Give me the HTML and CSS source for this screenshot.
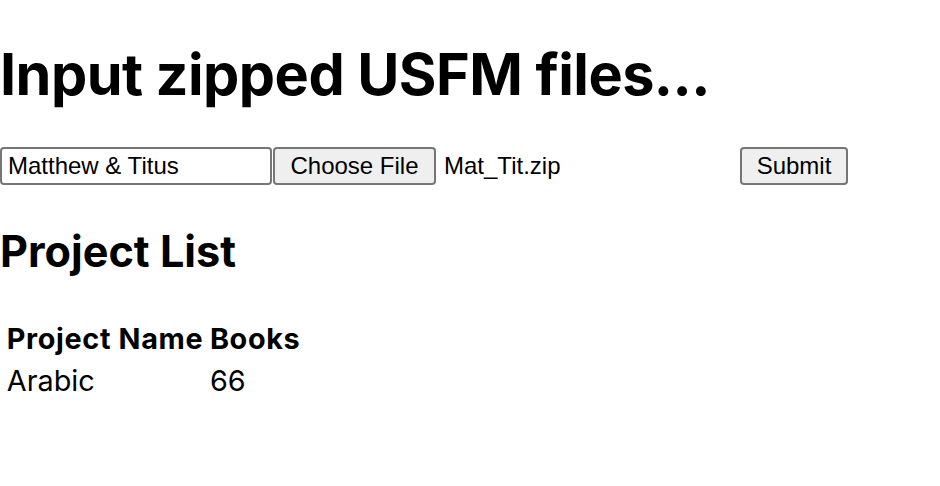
FILE: index.html
```html
<!DOCTYPE html>
<html lang="en">
<head>
<meta charset="utf-8">
<title>Input zipped USFM files</title>
<link rel="stylesheet" href="styles.css">
</head>
<body>
<h1 class="title">Input zipped USFM files...</h1>
<form class="upload">
  <input class="name-input" type="text" value="Matthew &amp; Titus">
  <div class="file-picker">
    <button class="btn choose" type="button">Choose File</button>
    <span class="file-name">Mat_Tit.zip</span>
  </div>
  <button class="btn submit" type="button">Submit</button>
</form>
<h2 class="section-title">Project List</h2>
<table class="projects">
  <thead>
    <tr><th>Project Name</th><th>Books</th></tr>
  </thead>
  <tbody>
    <tr><td>Arabic</td><td>66</td></tr>
  </tbody>
</table>
</body>
</html>
```
FILE: styles.css
```css
html, body {
  margin: 0;
  padding: 0;
  background: #fff;
  color: #000;
}
body {
  font-family: Inter, "Noto Sans", sans-serif;
  font-size: 28.8px;
}
.title {
  font-size: 57.6px;
  font-weight: 700;
  letter-spacing: -0.55px;
  margin: 38.6px 0;
  line-height: normal;
}
.upload {
  display: flex;
  align-items: center;
  height: 38px;
  margin: 0;
}
.name-input {
  box-sizing: border-box;
  width: 272px;
  height: 38px;
  margin: 0;
  padding: 0 6px;
  font-family: "Liberation Sans", Arial, sans-serif;
  font-size: 24px;
  color: #000;
  border: 2px solid #767676;
  border-radius: 4px;
  background: #fff;
}
.file-picker {
  display: flex;
  align-items: center;
  width: 467px;
  margin-left: 1px;
}
.btn {
  box-sizing: border-box;
  height: 38px;
  margin: 0;
  font-family: "Liberation Sans", Arial, sans-serif;
  font-size: 24px;
  color: #000;
  background: #efefef;
  border: 2px solid #767676;
  border-radius: 4px;
}
.choose {
  width: 163px;
  padding: 0;
}
.file-name {
  font-family: "Liberation Sans", Arial, sans-serif;
  font-size: 24px;
  margin-left: 8px;
}
.submit {
  width: 108px;
  padding: 0;
}
.section-title {
  font-size: 43.2px;
  font-weight: 700;
  margin: 40px 0 39px;
  line-height: normal;
}
.projects {
  border-spacing: 3.6px;
  margin-left: 2px;
}
.projects th,
.projects td {
  padding: 1.8px;
  text-align: left;
  font-size: 28.8px;
}
.projects th {
  font-weight: 700;
  letter-spacing: 0.65px;
}
```
